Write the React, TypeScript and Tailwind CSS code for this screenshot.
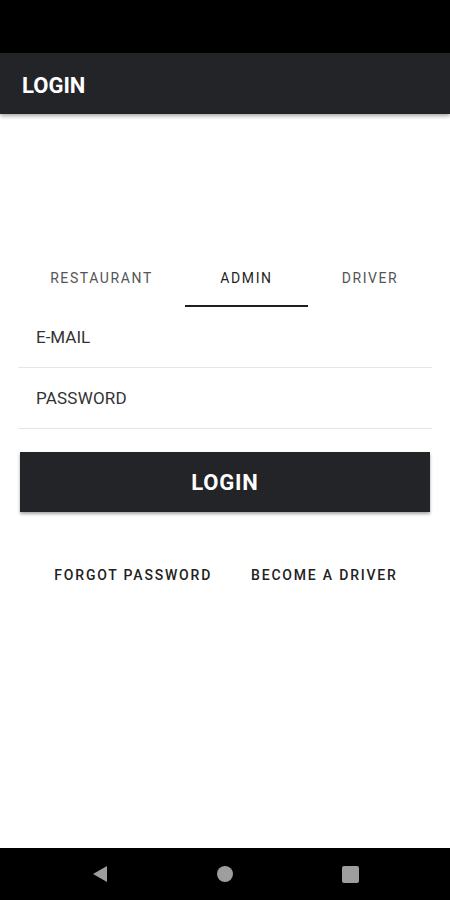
import { useState } from "react";

const tabs = [
  { key: "restaurant", label: "RESTAURANT", width: "w-[167px]" },
  { key: "admin", label: "ADMIN", width: "w-[123px]" },
  { key: "driver", label: "DRIVER", width: "w-[124px]" },
];

export default function App() {
  const [active, setActive] = useState("admin");

  return (
    <div className="flex h-[900px] w-[450px] flex-col bg-white font-['Roboto',sans-serif]">
      {/* status bar */}
      <div className="h-[53px] bg-black" />

      {/* app bar */}
      <header className="flex h-[61px] items-center bg-[#232427] px-[22px] pt-[3px] shadow-[0_2px_4px_rgba(0,0,0,0.35)]">
        <h1 className="text-[22px] font-bold text-white">LOGIN</h1>
      </header>

      <main className="flex flex-1 flex-col px-[18px] pt-[149px]">
        <div className="flex">
          {tabs.map((tab) => (
            <button
              key={tab.key}
              type="button"
              onClick={() => setActive(tab.key)}
              className={`${tab.width} flex h-[44px] flex-col items-center justify-between pt-[5px]`}
            >
              <span
                className={`text-[14px] tracking-[1.6px] ${
                  active === tab.key ? "text-[#1f1f1f]" : "text-[#555]"
                }`}
              >
                {tab.label}
              </span>
              <span
                className={`h-[2px] w-full ${
                  active === tab.key ? "bg-[#1f1f1f]" : "bg-transparent"
                }`}
              />
            </button>
          ))}
        </div>

        <div className="flex h-[61px] items-center border-b border-[#e6e6e6] pl-[18px] pt-[2px]">
          <span className="text-[17px] text-[#333]">E-MAIL</span>
        </div>
        <div className="flex h-[61px] items-center border-b border-[#e6e6e6] pl-[18px] pt-[2px]">
          <span className="text-[17px] tracking-[0.2px] text-[#333]">PASSWORD</span>
        </div>

        <button
          type="button"
          className="mx-[2px] mt-[23px] flex h-[60px] items-center justify-center bg-[#232427] shadow-[0_2px_3px_rgba(0,0,0,0.35)]"
        >
          <span className="text-[22px] font-bold tracking-[0.8px] text-white">LOGIN</span>
        </button>

        <div className="mt-[53px] flex justify-center gap-[39px] pl-[2px]">
          <button type="button" className="text-[14px] font-medium tracking-[1.8px] text-[#222]">
            FORGOT PASSWORD
          </button>
          <button type="button" className="text-[14px] font-medium tracking-[1.8px] text-[#222]">
            BECOME A DRIVER
          </button>
        </div>
      </main>

      {/* navigation bar */}
      <nav className="flex h-[52px] items-center justify-center gap-[109px] bg-black">
        <svg width="16" height="18" viewBox="0 0 16 18">
          <path d="M15 1 L15 17 L1 9 Z" fill="#9e9e9e" />
        </svg>
        <div className="h-[16px] w-[16px] rounded-full bg-[#9e9e9e]" />
        <div className="h-[17px] w-[17px] rounded-[2px] bg-[#9e9e9e]" />
      </nav>
    </div>
  );
}
